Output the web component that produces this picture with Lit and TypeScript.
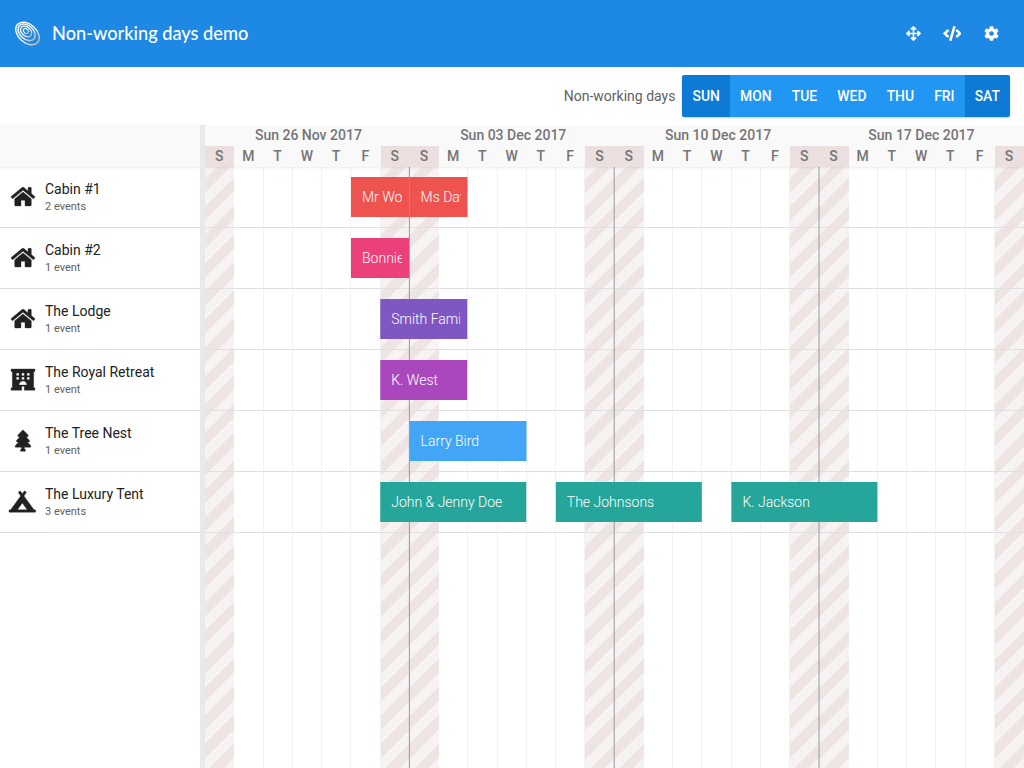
import { LitElement, html, css, svg } from "lit";
import { customElement } from "lit/decorators.js";

const DAY = 29.26;
const ICONS: Record<string, [number, string]> = {
  home: [576, "M488 312.7V456c0 13.3-10.7 24-24 24H348c-6.6 0-12-5.4-12-12V356c0-6.6-5.4-12-12-12h-72c-6.6 0-12 5.4-12 12v112c0 6.6-5.4 12-12 12H112c-13.3 0-24-10.7-24-24V312.7c0-3.6 1.6-7 4.4-9.3l188-154.8c4.4-3.6 10.8-3.6 15.3 0l188 154.8c2.7 2.3 4.3 5.7 4.3 9.3zm83.6-60.9L488 182.9V44.4c0-6.6-5.4-12-12-12h-56c-6.6 0-12 5.4-12 12V117l-89.5-73.7c-17.7-14.6-43.3-14.6-61 0L4.4 251.8c-5.1 4.2-5.8 11.8-1.6 16.9l25.5 31c4.2 5.1 11.8 5.8 16.9 1.6l235.2-193.7c4.4-3.6 10.8-3.6 15.3 0l235.2 193.7c5.1 4.2 12.7 3.5 16.9-1.6l25.5-31c4.2-5.2 3.4-12.7-1.7-16.9z"],
  hotel: [576, "M560 64c8.84 0 16-7.16 16-16V16c0-8.84-7.16-16-16-16H16C7.16 0 0 7.16 0 16v32c0 8.84 7.16 16 16 16h15.98v384H16c-8.84 0-16 7.16-16 16v32c0 8.84 7.16 16 16 16h240v-80c0-8.8 7.2-16 16-16h32c8.8 0 16 7.2 16 16v80h240c8.84 0 16-7.16 16-16v-32c0-8.84-7.16-16-16-16h-16V64h16zm-304 44.8c0-6.4 6.4-12.8 12.8-12.8h38.4c6.4 0 12.8 6.4 12.8 12.8v38.4c0 6.4-6.4 12.8-12.8 12.8h-38.4c-6.4 0-12.8-6.4-12.8-12.8v-38.4zm0 96c0-6.4 6.4-12.8 12.8-12.8h38.4c6.4 0 12.8 6.4 12.8 12.8v38.4c0 6.4-6.4 12.8-12.8 12.8h-38.4c-6.4 0-12.8-6.4-12.8-12.8v-38.4zm-128-96c0-6.4 6.4-12.8 12.8-12.8h38.4c6.4 0 12.8 6.4 12.8 12.8v38.4c0 6.4-6.4 12.8-12.8 12.8h-38.4c-6.4 0-12.8-6.4-12.8-12.8v-38.4zM179.2 256h-38.4c-6.4 0-12.8-6.4-12.8-12.8v-38.4c0-6.4 6.4-12.8 12.8-12.8h38.4c6.4 0 12.8 6.4 12.8 12.8v38.4c0 6.4-6.4 12.8-12.8 12.8zM192 384c0-53.02 42.98-96 96-96s96 42.98 96 96H192zm256-140.8c0 6.4-6.4 12.8-12.8 12.8h-38.4c-6.4 0-12.8-6.4-12.8-12.8v-38.4c0-6.4 6.4-12.8 12.8-12.8h38.4c6.4 0 12.8 6.4 12.8 12.8v38.4zm0-96c0 6.4-6.4 12.8-12.8 12.8h-38.4c-6.4 0-12.8-6.4-12.8-12.8v-38.4c0-6.4 6.4-12.8 12.8-12.8h38.4c6.4 0 12.8 6.4 12.8 12.8v38.4z"],
  tree: [384, "M378.31 378.49L298.42 288h30.63c9.01 0 16.98-5 20.78-13.06 3.8-8.04 2.55-17.26-3.28-24.05L268.42 160h28.89c9.1 0 17.3-5.35 20.86-13.61 3.52-8.13 1.86-17.59-4.24-24.08L203.66 4.83c-6.03-6.45-17.28-6.45-23.32 0L70.06 122.31c-6.1 6.49-7.75 15.95-4.24 24.08C69.38 154.65 77.59 160 86.69 160h28.89l-78.14 90.91c-5.81 6.78-7.06 15.99-3.27 24.04C37.97 283 45.93 288 54.95 288h30.63L5.69 378.49c-6 6.79-7.36 16.09-3.56 24.26 3.75 8.05 12 13.25 21.01 13.25H160v24.45l-30.29 48.4c-5.32 10.64 2.42 23.16 14.31 23.16h95.96c11.89 0 19.63-12.52 14.31-23.16L224 440.45V416h136.86c9.01 0 17.26-5.2 21.01-13.25 3.8-8.17 2.44-17.47-3.56-24.26z"],
  tent: [640, "M624 448h-24.68L359.54 117.75l53.41-73.55c5.19-7.15 3.61-17.16-3.54-22.35l-25.9-18.79c-7.15-5.19-17.15-3.61-22.35 3.55L320 63.3 278.83 6.6c-5.19-7.15-15.2-8.74-22.35-3.55l-25.88 18.8c-7.15 5.19-8.74 15.2-3.54 22.35l53.41 73.55L40.68 448H16c-8.84 0-16 7.16-16 16v32c0 8.84 7.16 16 16 16h608c8.84 0 16-7.16 16-16v-32c0-8.84-7.16-16-16-16zM320 288l116.36 160H203.64L320 288z"],
  move: [512, "M352.201 425.775l-79.196 79.196c-9.373 9.373-24.568 9.373-33.941 0l-79.196-79.196c-15.119-15.119-4.411-40.971 16.971-40.97h51.162L228 284H127.196v51.162c0 21.382-25.851 32.09-40.971 16.971L7.029 272.937c-9.373-9.373-9.373-24.569 0-33.941L86.225 159.8c15.119-15.119 40.971-4.411 40.971 16.971V228H228V127.196h-51.23c-21.382 0-32.09-25.851-16.971-40.971l79.196-79.196c9.373-9.373 24.568-9.373 33.941 0l79.196 79.196c15.119 15.119 4.411 40.971-16.971 40.971h-51.162V228h100.804v-51.162c0-21.382 25.851-32.09 40.97-16.971l79.196 79.196c9.373 9.373 9.373 24.569 0 33.941L425.773 352.2c-15.119 15.119-40.971 4.411-40.97-16.971V284H284v100.804h51.23c21.382 0 32.09 25.851 16.971 40.971z"],
  code: [640, "M278.9 511.5l-61-17.7c-6.4-1.8-10-8.5-8.2-14.9L346.2 8.7c1.8-6.4 8.5-10 14.9-8.2l61 17.7c6.4 1.8 10 8.5 8.2 14.9L293.8 503.3c-1.9 6.4-8.5 10.1-14.9 8.2zm-114-112.2l43.5-46.4c4.6-4.9 4.3-12.7-.8-17.2L117 256l90.6-79.7c5.1-4.5 5.5-12.3.8-17.2l-43.5-46.4c-4.5-4.8-12.1-5.1-17-.5L3.8 247.2c-5.1 4.7-5.1 12.8 0 17.5l144.1 135.1c4.9 4.6 12.5 4.4 17-.5zm327.2.6l144.1-135.1c5.1-4.7 5.1-12.8 0-17.5L492.1 112.1c-4.8-4.5-12.4-4.3-17 .5L431.6 159c-4.6 4.9-4.3 12.7.8 17.2L523 256l-90.6 79.7c-5.1 4.5-5.5 12.3-.8 17.2l43.5 46.4c4.5 4.9 12.1 5.1 17 .6z"],
  cog: [512, "M487.4 315.7l-42.6-24.6c4.3-23.2 4.3-47 0-70.2l42.6-24.6c4.9-2.8 7.1-8.6 5.5-14-11.1-35.6-30-67.8-54.7-94.6-3.8-4.1-10-5.1-14.8-2.3L380.8 110c-17.9-15.4-38.5-27.3-60.8-35.1V25.8c0-5.6-3.9-10.5-9.4-11.7-36.7-8.2-74.3-7.8-109.2 0-5.5 1.2-9.4 6.1-9.4 11.7V75c-22.2 7.9-42.8 19.8-60.8 35.1L88.7 85.5c-4.9-2.8-11-1.9-14.8 2.3-24.7 26.7-43.6 58.9-54.7 94.6-1.7 5.4.6 11.2 5.5 14L67.3 221c-4.3 23.2-4.3 47 0 70.2l-42.6 24.6c-4.9 2.8-7.1 8.6-5.5 14 11.1 35.6 30 67.8 54.7 94.6 3.8 4.1 10 5.1 14.8 2.3l42.6-24.6c17.9 15.4 38.5 27.3 60.8 35.1v49.2c0 5.6 3.9 10.5 9.4 11.7 36.7 8.2 74.3 7.8 109.2 0 5.5-1.2 9.4-6.1 9.4-11.7v-49.2c22.2-7.9 42.8-19.8 60.8-35.1l42.6 24.6c4.9 2.8 11 1.9 14.8-2.3 24.7-26.7 43.6-58.9 54.7-94.6 1.5-5.5-.7-11.3-5.6-14.1zM256 336c-44.1 0-80-35.9-80-80s35.9-80 80-80 80 35.9 80 80-35.9 80-80 80z"],
};

const icon = (name: string) => {
  const [w, d] = ICONS[name];
  return html`<svg viewBox="0 0 ${w} 512" fill="currentColor">${svg`<path d=${d}></path>`}</svg>`;
};

const RESOURCES = [
  { name: "Cabin #1", sub: "2 events", icon: "home" },
  { name: "Cabin #2", sub: "1 event", icon: "home" },
  { name: "The Lodge", sub: "1 event", icon: "home" },
  { name: "The Royal Retreat", sub: "1 event", icon: "hotel" },
  { name: "The Tree Nest", sub: "1 event", icon: "tree" },
  { name: "The Luxury Tent", sub: "3 events", icon: "tent" },
];
const EVENTS = [
  { row: 0, from: 5, to: 7, text: "Mr Worth", color: "#ef5350" },
  { row: 0, from: 7, to: 9, text: "Ms Davis", color: "#ef5350" },
  { row: 1, from: 5, to: 7, text: "Bonnie Lee", color: "#ec407a" },
  { row: 2, from: 6, to: 9, text: "Smith Family", color: "#7e57c2" },
  { row: 3, from: 6, to: 9, text: "K. West", color: "#ab47bc" },
  { row: 4, from: 7, to: 11, text: "Larry Bird", color: "#42a5f5" },
  { row: 5, from: 6, to: 11, text: "John & Jenny Doe", color: "#26a69a" },
  { row: 5, from: 12, to: 17, text: "The Johnsons", color: "#26a69a" },
  { row: 5, from: 18, to: 23, text: "K. Jackson", color: "#26a69a" },
];
const WEEKS = ["Sun 26 Nov 2017", "Sun 03 Dec 2017", "Sun 10 Dec 2017", "Sun 17 Dec 2017"];
const DAYS = ["SUN", "MON", "TUE", "WED", "THU", "FRI", "SAT"];
const LETTERS = ["S", "M", "T", "W", "T", "F", "S"];
const TICKS = Array.from({ length: 28 }, (_, i) => i);
const isOff = (i: number) => i % 7 === 0 || i % 7 === 6;

@customElement("app-root")
export class AppRoot extends LitElement {
  static styles = css`
    :host { display: block; width: 1024px; height: 768px; overflow: hidden; background: #fff; font-family: Roboto, sans-serif; }
    .bar { height: 67px; background: #1e88e5; color: #fff; display: flex; align-items: center; padding-left: 14px; }
    .logo { width: 27px; height: 27px; margin: 0 11px 1px 0; }
    .title { font-family: Lato, sans-serif; font-size: 18.2px; font-weight: 500; flex: 1; margin-bottom: 2px; }
    .tools { display: flex; align-items: center; margin-right: 13.4px; }
    .tool { width: 39px; display: flex; justify-content: center; }
    .tool svg { height: 15px; display: block; }
    .filter { height: 58px; display: flex; align-items: center; justify-content: flex-end; padding-right: 14px; }
    .filter-label { font-size: 14px; color: #616161; margin-right: 7px; }
    .group { display: flex; height: 42px; border-radius: 2px; overflow: hidden; box-shadow: 0 1px 2px rgba(0,0,0,.2); }
    .day-btn { background: #2196f3; color: #fff; font-size: 13.9px; font-weight: 500; display: flex; align-items: center; padding: 0 10.08px; }
    .day-btn.on { background: #0d7bd6; }
    .gantt { display: flex; height: 643px; }
    .locked { width: 200px; flex: none; }
    .locked-head { height: 42px; background: #f9f9f9; box-shadow: 0 1px 2px rgba(0,0,0,.08); }
    .res { height: 61px; box-sizing: border-box; border-bottom: 1px solid #e0e0e0; display: flex; align-items: center; }
    .res-icon { width: 45px; flex: none; display: flex; justify-content: center; color: #212121; }
    .res-icon svg { display: block; height: 21.33px; overflow: visible; stroke: currentColor; stroke-width: 8px; }
    .res-name { font-size: 14px; color: #212121; line-height: 17px; }
    .res-sub { font-size: 11px; color: #616161; line-height: 15px; margin-top: 1px; }
    .splitter { width: 5px; flex: none; background: #e9e9e9; }
    .time { width: 819px; position: relative; overflow: hidden; }
    .head { height: 42px; background: #f9f9f9; box-shadow: 0 1px 2px rgba(0,0,0,.08); position: relative; z-index: 3; }
    .weeks { display: flex; height: 21px; padding-left: 1px; }
    .week { width: calc(${DAY}px * 7); flex: none; text-align: center; font-size: 14px; font-weight: 500; color: #757575; line-height: 21px; }
    .week:last-child { width: 202px; }
    .letters { display: flex; height: 21px; }
    .letter { width: ${DAY}px; flex: none; box-sizing: border-box; padding-right: 1px; text-align: center; font-size: 14px; font-weight: 500; color: #757575; line-height: 21px; }
    .letter.off { background: #ebdfdf; }
    .body { position: relative; height: 601px; }
    .cols { position: absolute; inset: 0; display: flex; }
    .col { width: ${DAY}px; flex: none; box-sizing: border-box; border-right: 1px solid #f2f2f2; }
    .col.off { border-right: 0; background: repeating-linear-gradient(-45deg, #f8f3f3 0 7.5px, #efe4e4 7.5px 17.5px, #f8f3f3 17.5px 20px); }
    .rows { position: absolute; inset: 0; }
    .row { height: 61px; box-sizing: border-box; border-bottom: 1px solid #e0e0e0; }
    .week-line { position: absolute; left: 0; top: 0; bottom: 0; width: 1px; background: #999; }
    .ev { position: absolute; left: 0; height: 40px; box-sizing: border-box; padding: 0 7px 0 11px; color: #fff; font-size: 14px; font-weight: 300; line-height: 40px; }
    .ev span { display: block; overflow: hidden; white-space: nowrap; }
  `;

  render() {
    return html`
      <div class="bar">
        <svg class="logo" viewBox="0 0 28 28" fill="none">
          <defs>
            <linearGradient id="lg" x1="0" y1="0" x2="1" y2="0">
              <stop offset="0" stop-color="#ffffff"></stop>
              <stop offset="0.6" stop-color="#f4f4f4"></stop>
              <stop offset="1" stop-color="#b5bcc4"></stop>
            </linearGradient>
          </defs>
          <g transform="rotate(42 14 14)" stroke="url(#lg)">
            <ellipse cx="14" cy="14" rx="14" ry="9.5" stroke-width="1.5"></ellipse>
            <ellipse cx="12.5" cy="13.7" rx="10.2" ry="7" stroke-width="1.5"></ellipse>
            <ellipse cx="11.5" cy="13.4" rx="6.6" ry="4.6" stroke-width="1.4"></ellipse>
            <ellipse cx="11" cy="13.2" rx="3" ry="2.2" stroke-width="1.2"></ellipse>
          </g>
        </svg>
        <div class="title">Non-working days demo</div>
        <div class="tools">
          <div class="tool">${icon("move")}</div>
          <div class="tool">${icon("code")}</div>
          <div class="tool">${icon("cog")}</div>
        </div>
      </div>
      <div class="filter">
        <div class="filter-label">Non-working days</div>
        <div class="group">
          ${DAYS.map((d, i) => html`<div class="day-btn ${isOff(i) ? "on" : ""}">${d}</div>`)}
        </div>
      </div>
      <div class="gantt">
        <div class="locked">
          <div class="locked-head"></div>
          ${RESOURCES.map((r) => html`
            <div class="res">
              <div class="res-icon">${icon(r.icon)}</div>
              <div>
                <div class="res-name">${r.name}</div>
                <div class="res-sub">${r.sub}</div>
              </div>
            </div>`)}
        </div>
        <div class="splitter"></div>
        <div class="time">
          <div class="head">
            <div class="weeks">${WEEKS.map((w) => html`<div class="week">${w}</div>`)}</div>
            <div class="letters">${TICKS.map((i) => html`<div class="letter ${isOff(i) ? "off" : ""}">${LETTERS[i % 7]}</div>`)}</div>
          </div>
          <div class="body">
            <div class="cols">${TICKS.map((i) => html`<div class="col ${isOff(i) ? "off" : ""}"></div>`)}</div>
            <div class="rows">${RESOURCES.map(() => html`<div class="row"></div>`)}</div>
            ${[7, 14, 21].map((i) => html`<div class="week-line" style="transform:translateX(${i * DAY - 0.95}px)"></div>`)}
            ${EVENTS.map((e) => html`<div class="ev" style="transform:translateX(${e.from * DAY - 0.3}px);width:${(e.to - e.from) * DAY - 0.4}px;top:${10 + e.row * 61}px;background:${e.color}"><span>${e.text}</span></div>`)}
          </div>
        </div>
      </div>
    `;
  }
}
